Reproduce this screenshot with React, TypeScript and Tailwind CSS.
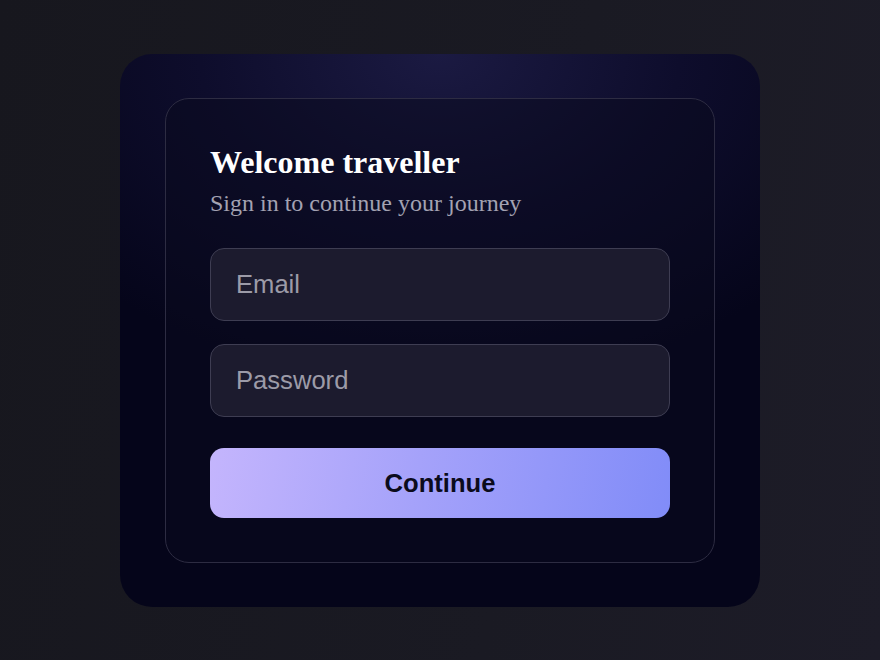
export default function App() {
  return (
    <div className="flex h-screen w-full items-center justify-center bg-[linear-gradient(100deg,#17171e_0%,#1a1a23_60%,#1d1c28_100%)]">
      {/* Outer frame */}
      <div className="mt-px w-[640px] rounded-[32px] px-[45px] py-[44px] bg-[radial-gradient(ellipse_75%_60%_at_50%_0%,#1b1a42_0%,#0e0d2c_50%,#05051a_100%)]">
        {/* Card */}
        <div className="rounded-[24px] border-[1.5px] border-[#2d2c42] px-[44px] pt-[44px] pb-[44px] bg-[#0a0a1e]/50">
          <h1 className="text-[32px] font-bold leading-[38px] text-white [font-family:'Liberation_Serif',serif]">
            Welcome traveller
          </h1>
          <p className="mt-[6px] text-[24px] leading-[32px] text-[#a3a2b2] [font-family:'Liberation_Serif',serif]">
            Sign in to continue your journey
          </p>

          <form className="mt-[29px] flex flex-col gap-[23px]" onSubmit={(e) => e.preventDefault()}>
            <input
              type="email"
              placeholder="Email"
              className="h-[73px] w-full rounded-[14px] border-[1.5px] border-[#3e3d52] bg-[#1c1b2e] px-[25px] text-[25.6px] text-white outline-none placeholder:text-[#9c9ba8] [font-family:'Liberation_Sans',Arial,sans-serif]"
            />
            <input
              type="password"
              placeholder="Password"
              className="h-[73px] w-full rounded-[14px] border-[1.5px] border-[#3e3d52] bg-[#1c1b2e] px-[25px] text-[25.6px] text-white outline-none placeholder:text-[#9c9ba8] [font-family:'Liberation_Sans',Arial,sans-serif]"
            />
            <button
              type="submit"
              className="mt-[8px] h-[70px] w-full rounded-[14px] bg-[linear-gradient(100deg,#c4b5fd_0%,#a5a2fa_45%,#818cf8_100%)] text-[25.6px] font-bold text-[#0b0b1c] [font-family:'Liberation_Sans',Arial,sans-serif]"
            >
              Continue
            </button>
          </form>
        </div>
      </div>
    </div>
  );
}
